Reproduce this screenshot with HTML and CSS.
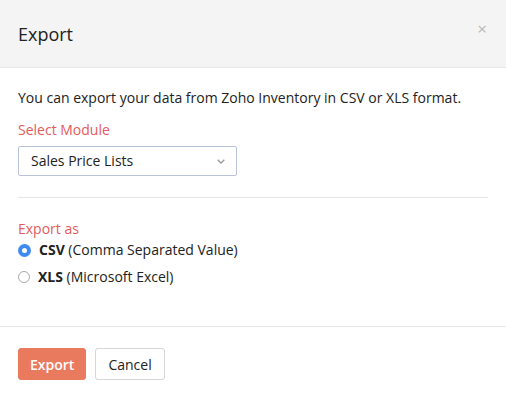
FILE: index.html
```html
<!DOCTYPE html>
<html lang="en">

<head>
    <meta charset="UTF-8">
    <title>Export</title>
    <link rel="stylesheet" href="styles.css">
</head>

<body>
    <div class="modal">
        <div class="modal-header">
            <h4>Export</h4>
            <span class="close">&times;</span>
        </div>

        <div class="modal-body">
            <p class="intro">You can export your data from Zoho Inventory in CSV or XLS format.</p>

            <label class="field-label">Select Module</label>
            <div class="select">
                <span>Sales Price Lists</span>
                <svg width="8" height="5" viewBox="0 0 8 5"><path d="M0.7 0.7l3.3 3.3 3.3-3.3" fill="none" stroke="#999" stroke-width="1.3"/></svg>
            </div>

            <hr>

            <label class="field-label">Export as</label>
            <label class="radio">
                <span class="dot checked"></span>
                <span><b>CSV</b> (Comma Separated Value)</span>
            </label>
            <label class="radio">
                <span class="dot"></span>
                <span><b>XLS</b> (Microsoft Excel)</span>
            </label>
        </div>

        <div class="modal-footer">
            <button class="btn primary">Export</button>
            <button class="btn">Cancel</button>
        </div>
    </div>
</body>

</html>
```

FILE: styles.css
```css
/* styles.css */
body {
    margin: 0;
    background-color: #fff;
    font-family: "Open Sans", sans-serif;
    font-size: 14px;
    line-height: 20px;
    color: #222;
}

.modal {
    width: 506px;
    height: 398px;
    display: flex;
    flex-direction: column;
}

.modal-header {
    height: 68px;
    flex-shrink: 0;
    background-color: #f4f4f4;
    border-bottom: 1px solid #e8e8e8;
    display: flex;
    align-items: center;
    justify-content: space-between;
    padding: 0 18px;
    box-sizing: border-box;
}

.modal-header h4 {
    margin: 0;
    font-size: 18px;
    font-weight: normal;
    color: #222;
}

.close {
    color: #b8b8b8;
    font-size: 17px;
    margin-top: -10px;
    margin-right: 1px;
}

.modal-body {
    padding: 20px 18px 0;
    height: 258px;
    flex-shrink: 0;
    box-sizing: border-box;
    display: flex;
    flex-direction: column;
}

.intro {
    margin: 0 0 12px;
}

.field-label {
    color: #e45b5b;
    margin-bottom: 6px;
}

.select {
    width: 219px;
    height: 30px;
    flex-shrink: 0;
    border: 1px solid #b8c4dc;
    border-radius: 2px;
    box-sizing: border-box;
    display: flex;
    align-items: center;
    justify-content: space-between;
    padding: 0 11px 0 12px;
}

hr {
    border: none;
    border-top: 1px solid #e6e6e6;
    margin: 21px 0 21px;
    width: 470px;
}

.radio {
    display: flex;
    align-items: center;
    gap: 8px;
    line-height: 22px;
}

.radio + .radio {
    margin-top: 5px;
}

.field-label + .radio {
    margin-top: -6px;
}

.dot {
    width: 12px;
    height: 12px;
    border: 1px solid #aaa;
    border-radius: 50%;
    box-sizing: border-box;
}

.dot.checked {
    border: 4px solid #3d8bf0;
    background: #fff;
    width: 13px;
    height: 13px;
}

.modal-footer {
    border-top: 1px solid #e6e6e6;
    padding: 21px 18px;
    display: flex;
    gap: 9px;
}

.btn {
    font-family: inherit;
    font-size: 14px;
    height: 32px;
    padding: 0 12px;
    background: #fff;
    border: 1px solid #d6d6d6;
    border-radius: 3px;
    color: #222;
}

.btn.primary {
    padding: 0 11px;
    background-color: #ea7a5d;
    border-color: #ea7a5d;
    color: #fff;
    font-weight: 600;
}
```
